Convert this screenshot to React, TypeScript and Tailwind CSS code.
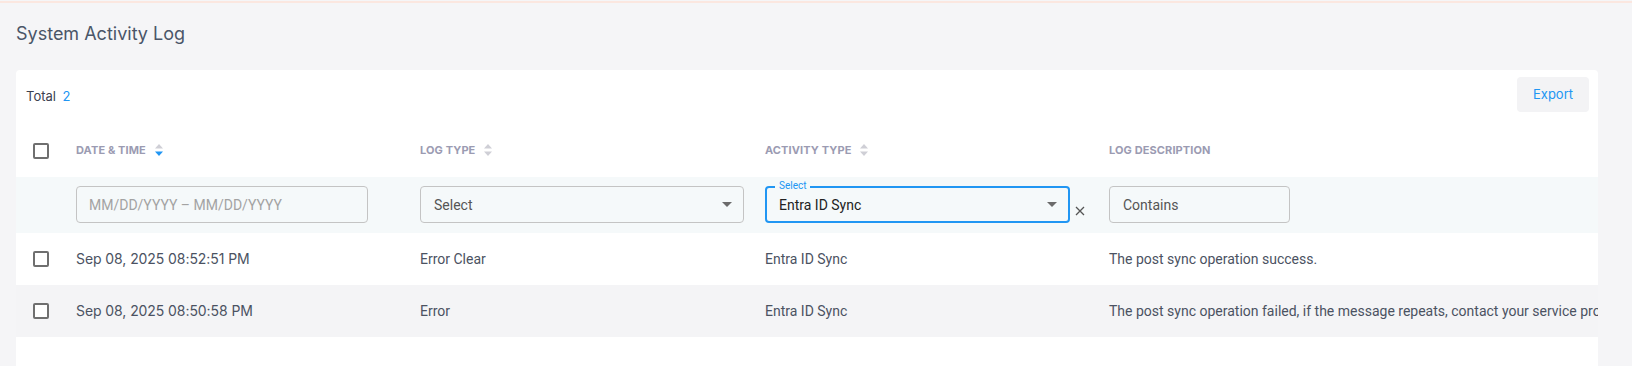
import React from 'react'

interface LogRow {
  id: number
  date: string
  logType: string
  activity: string
  description: string
}

const ROWS: LogRow[] = [
  { id: 1, date: 'Sep 08, 2025 08:52:51 PM', logType: 'Error Clear', activity: 'Entra ID Sync', description: 'The post sync operation success.' },
  { id: 2, date: 'Sep 08, 2025 08:50:58 PM', logType: 'Error', activity: 'Entra ID Sync', description: 'The post sync operation failed, if the message repeats, contact your service provider.' },
]

function SortIcon({ active }: { active?: boolean }) {
  return (
    <svg width="8" height="13" viewBox="0 0 8 13" className="ml-[9px] shrink-0">
      <path d="M4 0 L8 4.5 L0 4.5 Z" fill="#cfcfd6" />
      <path d="M0 7.5 L8 7.5 L4 12 Z" fill={active ? '#2196f3' : '#cfcfd6'} />
    </svg>
  )
}

function Caret() {
  return (
    <svg width="10" height="5" viewBox="0 0 10 5" className="shrink-0">
      <path d="M0 0 L10 0 L5 5 Z" fill="#6b6b6b" />
    </svg>
  )
}

function Checkbox() {
  return <div className="w-4 h-4 rounded-[2px] border-2 border-[#6f6f6f] bg-white" />
}

export default function App() {
  return (
    <div className="w-[1632px] h-[366px] overflow-hidden bg-[#f5f5f7] font-['Inter',sans-serif]">
      <div className="h-px bg-[#f5f5f7]" />
      <div className="h-[2px] bg-[#fbe7e0]" />

      {/* Title */}
      <h1 className="px-4 pt-[19px] h-[67px] text-[18px] leading-6 text-[#4a5568]">System Activity Log</h1>

      {/* Card */}
      <div className="ml-4 w-[1582px] bg-white rounded-t-[4px] overflow-hidden">
        <div className="h-[54px] flex items-start justify-between pl-[10px] pr-[9px]">
          <p className="pt-[16px] text-[13px] leading-5 text-[#3c4150]">
            Total <span className="ml-[3px] text-[#2196f3]">2</span>
          </p>
          <button className="mt-[7px] w-[72px] h-[35px] rounded-[4px] bg-[#f3f3f5] text-[13px] text-[#2196f3]">Export</button>
        </div>

        {/* Header row */}
        <div className="flex h-[53px] items-center text-[11px] font-bold uppercase tracking-[0.01em] text-[#9b9bb2] whitespace-nowrap">
          <div className="w-[44px] pl-[17px] shrink-0"><Checkbox /></div>
          <div className="w-[344px] pl-4 shrink-0 flex items-center">Date &amp; Time<SortIcon active /></div>
          <div className="w-[345px] pl-4 shrink-0 flex items-center">Log Type<SortIcon /></div>
          <div className="w-[344px] pl-4 shrink-0 flex items-center">Activity Type<SortIcon /></div>
          <div className="w-[600px] pl-4 shrink-0">Log Description</div>
        </div>

        {/* Filter row */}
        <div className="flex h-[56px] pt-[9px] bg-[#f5f9fa] text-sm font-['Roboto',sans-serif]">
          <div className="w-[44px] shrink-0" />
          <div className="w-[344px] pl-4 shrink-0">
            <div className="w-[292px] h-[37px] border border-[#c4c4c4] rounded-[4px] flex items-center px-[12px] text-[#a3a3a3]">
              MM/DD/YYYY – MM/DD/YYYY
            </div>
          </div>
          <div className="w-[345px] pl-4 shrink-0">
            <div className="w-[324px] h-[37px] border border-[#c4c4c4] rounded-[4px] flex items-center justify-between pl-[13px] pr-[11px] text-[#555]">
              <span>Select</span>
              <Caret />
            </div>
          </div>
          <div className="w-[344px] pl-4 shrink-0 flex items-start">
            <div className="relative w-[305px] h-[37px] border-2 border-[#2196f3] rounded-[4px] flex items-center justify-between pl-[12px] pr-[11px] text-[#222]">
              <span className="absolute -top-[9px] left-[8px] px-[4px] bg-[#f5f9fa] text-[10px] leading-[14px] text-[#2196f3]">Select</span>
              <span>Entra ID Sync</span>
              <Caret />
            </div>
            <svg width="10" height="10" viewBox="0 0 10 10" className="ml-[5px] mt-[20px]">
              <path d="M1 1 L9 9 M9 1 L1 9" stroke="#555" strokeWidth="1.3" />
            </svg>
          </div>
          <div className="w-[600px] pl-4 shrink-0">
            <div className="w-[181px] h-[37px] border border-[#c4c4c4] rounded-[4px] flex items-center px-[13px] text-[#555]">
              Contains
            </div>
          </div>
        </div>

        {/* Data rows */}
        {ROWS.map((row, i) => (
          <div
            key={row.id}
            className={`flex h-[52px] items-center text-sm font-['Roboto',sans-serif] text-[#4b5262] whitespace-nowrap ${i % 2 === 1 ? 'bg-[#f4f4f6]' : 'bg-white'}`}
          >
            <div className="w-[44px] pl-[17px] shrink-0"><Checkbox /></div>
            <div className="w-[344px] pl-4 shrink-0 font-['Inter',sans-serif] tracking-[-0.08px]">{row.date}</div>
            <div className="w-[345px] pl-4 shrink-0">{row.logType}</div>
            <div className="w-[344px] pl-4 shrink-0">{row.activity}</div>
            <div className="w-[700px] pl-4 shrink-0">{row.description}</div>
          </div>
        ))}
        <div className="h-[40px] bg-white" />
      </div>
    </div>
  )
}
